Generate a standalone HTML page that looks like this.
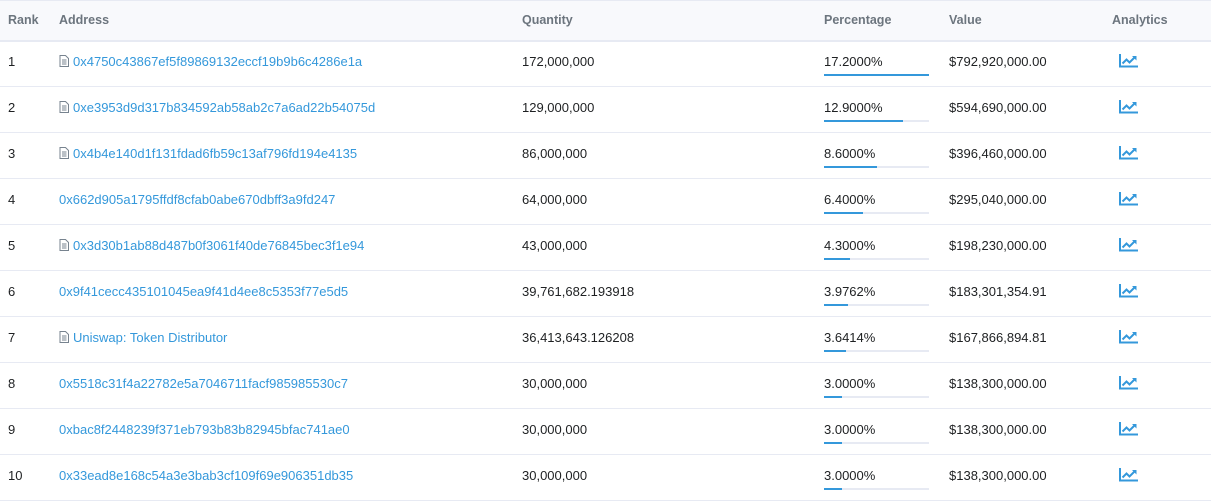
<!DOCTYPE html>
<html><head><style>
body{margin:0;width:1211px;height:500px;overflow:hidden;background:#fff;font-family:"Liberation Sans",Arial,sans-serif;font-size:13px;color:#1e2022}
.hdr{position:absolute;left:0;top:0;width:1211px;height:39px;background:#f8f9fc;border-top:1px solid #e7eaf3;border-bottom:2px solid #e7eaf3;box-sizing:content-box}
.hdr span{position:absolute;top:12px;font-weight:bold;color:#6c757e;font-size:12.5px}
.row{position:absolute;left:0;width:1211px;height:45px;border-bottom:1px solid #e7eaf3}
.row span{position:absolute;top:13px}
a{color:#3498db;text-decoration:none}
.doc{display:inline-block;vertical-align:-1px;margin-right:4px}
.bar{position:absolute;left:824px;top:33px;width:105px;height:2px;background:#e7eaf3}
.bar i{display:block;height:2px;background:#3498db}
.ic{position:absolute;left:1119px;top:13px}
</style></head><body>
<div class="hdr"><span style="left:8px">Rank</span><span style="left:59px">Address</span><span style="left:522px">Quantity</span><span style="left:824px">Percentage</span><span style="left:949px">Value</span><span style="left:1112px">Analytics</span></div>
<div id="rows"></div>
<script>
var d=[["1",1,"0x4750c43867ef5f89869132eccf19b9b6c4286e1a","172,000,000","17.2000%",100,"$792,920,000.00"],
["2",1,"0xe3953d9d317b834592ab58ab2c7a6ad22b54075d","129,000,000","12.9000%",75,"$594,690,000.00"],
["3",1,"0x4b4e140d1f131fdad6fb59c13af796fd194e4135","86,000,000","8.6000%",50,"$396,460,000.00"],
["4",0,"0x662d905a1795ffdf8cfab0abe670dbff3a9fd247","64,000,000","6.4000%",37,"$295,040,000.00"],
["5",1,"0x3d30b1ab88d487b0f3061f40de76845bec3f1e94","43,000,000","4.3000%",25,"$198,230,000.00"],
["6",0,"0x9f41cecc435101045ea9f41d4ee8c5353f77e5d5","39,761,682.193918","3.9762%",23,"$183,301,354.91"],
["7",1,"Uniswap: Token Distributor","36,413,643.126208","3.6414%",21,"$167,866,894.81"],
["8",0,"0x5518c31f4a22782e5a7046711facf985985530c7","30,000,000","3.0000%",17,"$138,300,000.00"],
["9",0,"0xbac8f2448239f371eb793b83b82945bfac741ae0","30,000,000","3.0000%",17,"$138,300,000.00"],
["10",0,"0x33ead8e168c54a3e3bab3cf109f69e906351db35","30,000,000","3.0000%",17,"$138,300,000.00"]];
var doc='<svg class="doc" width="10" height="12" viewBox="0 0 10 12"><path d="M1 .5h5.5L9.5 3.5V11.5H1z" fill="none" stroke="#77838f"/><path d="M3 5h4.5M3 7h4.5M3 9h4.5" stroke="#77838f"/></svg>';
var ic='<svg class="ic" width="19" height="14" viewBox="0 0 19 14"><path d="M1 0v12.5h18" fill="none" stroke="#3498db" stroke-width="2"/><path d="M3.5 9.5l4-4 3 3 5-5" fill="none" stroke="#3498db" stroke-width="2"/><path d="M13 2h4.5v4.5z" fill="#3498db"/></svg>';
var h='';d.forEach(function(r,i){h+='<div class="row" style="top:'+(41+46*i)+'px"><span style="left:8px">'+r[0]+'</span><span style="left:59px">'+(r[1]?doc:'')+'<a>'+r[2]+'</a></span><span style="left:522px">'+r[3]+'</span><span style="left:824px">'+r[4]+'</span><div class="bar"><i style="width:'+r[5]+'%"></i></div><span style="left:949px">'+r[6]+'</span>'+ic+'</div>';});
document.getElementById('rows').innerHTML=h;
</script>
</body></html>
